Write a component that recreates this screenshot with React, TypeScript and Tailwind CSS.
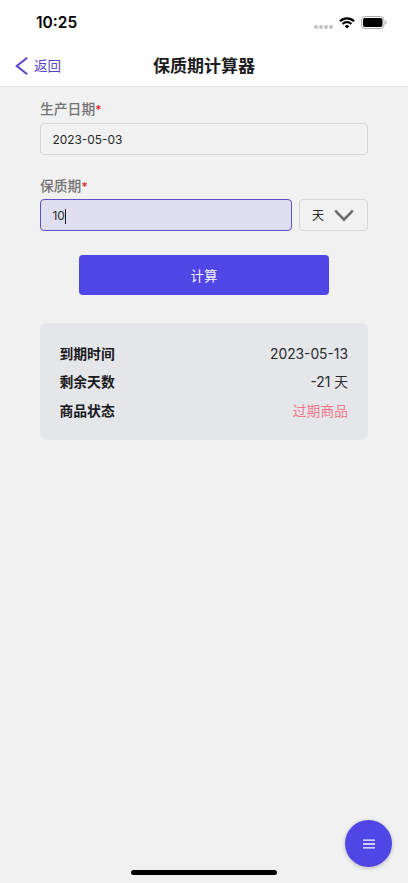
import type { ReactNode } from 'react'

function StatusBar() {
  return (
    <div className="flex h-11 items-center justify-between pl-[36px] pr-[21px] pt-[2px]">
      <span className="text-[15.5px] font-semibold leading-5 text-black">10:25</span>
      <div className="flex items-center">
        <div className="mt-[7px] mr-[6px] flex gap-[1px]">
          <i className="size-[4px] rounded-full bg-[#c2c2c2]" />
          <i className="size-[4px] rounded-full bg-[#c2c2c2]" />
          <i className="size-[4px] rounded-full bg-[#c2c2c2]" />
          <i className="size-[4px] rounded-full bg-[#c2c2c2]" />
        </div>
        <svg className="-mt-[1px] mr-[6px]" width="16" height="12" viewBox="0 0 16 12" fill="none" stroke="black">
          <path d="M1 4.2a10 10 0 0 1 14 0" strokeWidth="2.3" />
          <path d="M3.6 6.9a6.3 6.3 0 0 1 8.8 0" strokeWidth="2.1" />
          <path d="M8 11.6 5.7 9.2a3.3 3.3 0 0 1 4.6 0z" fill="black" stroke="none" />
        </svg>
        <svg className="-mt-[1px]" width="26" height="13" viewBox="0 0 26 13">
          <rect x="0.5" y="0.5" width="22.5" height="12" rx="3.5" fill="none" stroke="#aaa" />
          <rect x="2" y="2" width="19.5" height="9" rx="2" fill="black" />
          <path d="M24.2 4.5c1.7.6 1.7 3.3 0 3.9z" fill="#aaa" />
        </svg>
      </div>
    </div>
  )
}

function NavBar() {
  return (
    <div className="grid h-[43px] grid-cols-[1fr_auto_1fr] items-center px-[15px]">
      <button className="flex items-center gap-[6px] text-[#5546c8]">
        <svg width="13" height="18" viewBox="0 0 13 18" fill="none" stroke="currentColor" strokeWidth="2">
          <path d="M12.2 0.8 1.8 9l10.4 8.2" />
        </svg>
        <span className="text-[13.5px] leading-5">返回</span>
      </button>
      <h1 className="text-[17px] font-semibold leading-6 text-[#1c1c1e]">保质期计算器</h1>
    </div>
  )
}

function Label({ children }: { children: ReactNode }) {
  return (
    <label className="block h-5 text-[13.8px] font-medium leading-5 text-[#737373]">
      {children}
      <span className="text-[12px] text-[#dc2626]">*</span>
    </label>
  )
}

function ResultRow({ label, value, expired }: { label: string; value: string; expired?: boolean }) {
  return (
    <div className="flex h-[28.5px] items-center justify-between text-[13.8px]">
      <span className="font-semibold text-[#18181b]">{label}</span>
      <span className={expired ? 'text-[#f0788a]' : 'text-[#27272a]'}>{value}</span>
    </div>
  )
}

export default function App() {
  return (
    <div className="relative flex h-[883px] w-[408px] flex-col overflow-hidden bg-[#f1f1f1] font-[Inter,'Noto_Sans_CJK_SC',sans-serif]">
      <header className="h-[87px] border-b border-[#e4e4e4] bg-white">
        <StatusBar />
        <NavBar />
      </header>

      <main className="px-[40px] pt-[12px]">
        {/* Production date */}
        <Label>生产日期</Label>
        <div className="mt-[4px] flex h-8 items-center rounded-[4px] border border-[#d6d6d6] px-[11.5px] pt-[2px] text-[11.9px] text-[#27272a]">
          2023-05-03
        </div>

        {/* Shelf life */}
        <div className="mt-[21px]">
          <Label>保质期</Label>
        </div>
        <div className="mt-[3px] flex gap-[7px]">
          <div className="flex h-8 w-[252px] items-center rounded-[4px] border border-[#5d50c6] bg-[#e0dff0] px-[11.5px] pt-[2px] text-[11.9px] text-[#27272a]">
            10
            <span className="h-[15px] w-[1.5px] bg-[#18181b]" />
          </div>
          <div className="flex h-8 flex-1 items-center rounded-[4px] border border-[#d6d6d6] pl-3 pt-[1px] text-[12px] text-[#27272a]">
            天
            <svg className="ml-[10px]" width="20" height="13" viewBox="0 0 20 13" fill="none" stroke="#6b6b6b" strokeWidth="2.6">
              <path d="M1.2 1.6 10 10.6l8.8-9" />
            </svg>
          </div>
        </div>

        <button className="mx-auto mt-[24px] block h-10 w-[250px] rounded-[4px] bg-[#4f46e5] pt-[2px] text-[13.5px] text-[#f4f4ff]">
          计算
        </button>

        <section className="mt-[28px] h-[117px] rounded-[6px] bg-[#e5e6ea] pl-[19.5px] pr-[20px] pt-[17px]">
          <ResultRow label="到期时间" value="2023-05-13" />
          <ResultRow label="剩余天数" value="-21 天" />
          <ResultRow label="商品状态" value="过期商品" expired />
        </section>
      </main>

      {/* Floating menu */}
      <button className="absolute left-[345px] top-[820px] flex size-[47px] items-center justify-center rounded-full bg-[#4f46e5] shadow-[0_1px_4px_rgba(0,0,0,0.25)]">
        <svg width="12" height="10" viewBox="0 0 12 10" stroke="white" strokeWidth="1.3">
          <path d="M0 1.2h12M0 5h12M0 8.8h12" />
        </svg>
      </button>

      <div className="absolute bottom-[8px] left-[131px] h-[5px] w-[146px] rounded-full bg-black" />
    </div>
  )
}
